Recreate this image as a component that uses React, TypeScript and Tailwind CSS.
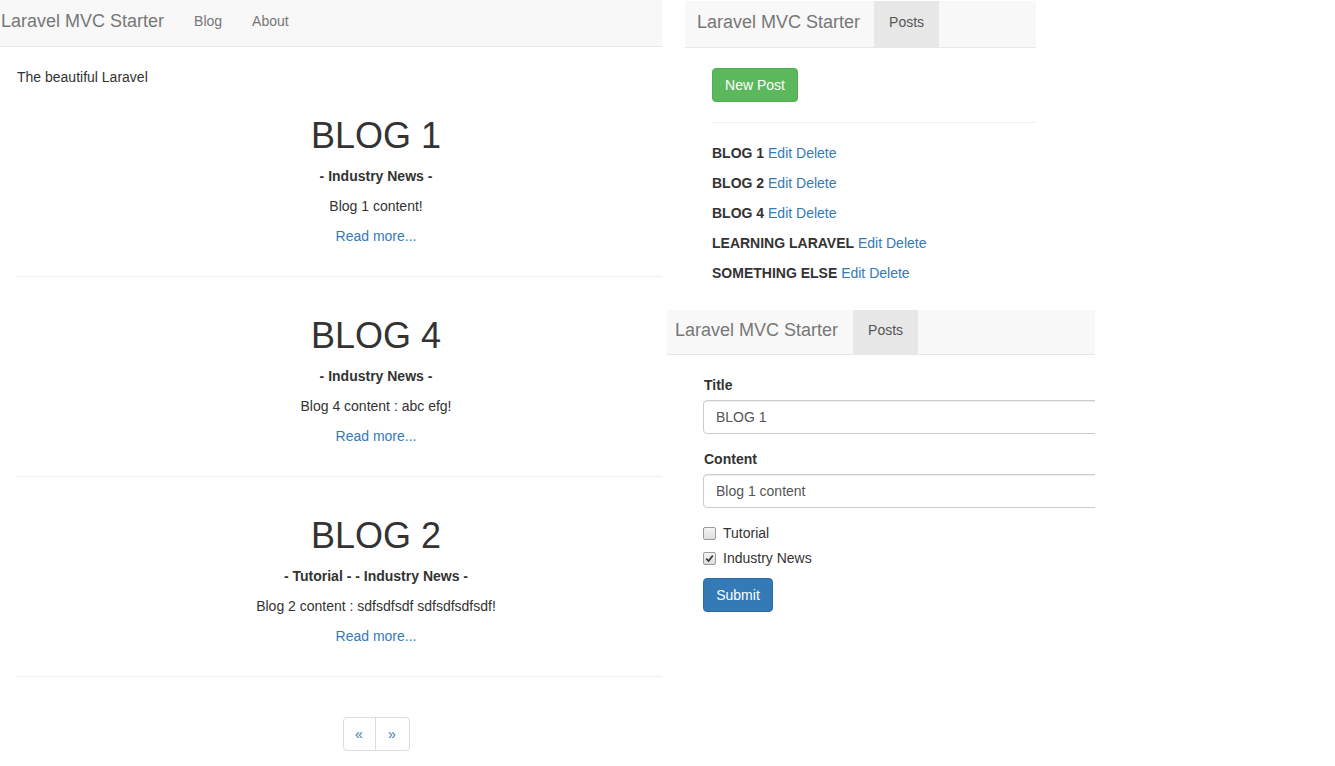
const posts = [
  { title: "BLOG 1", cats: "- Industry News -", body: "Blog 1 content!" },
  { title: "BLOG 4", cats: "- Industry News -", body: "Blog 4 content : abc efg!" },
  { title: "BLOG 2", cats: "- Tutorial - - Industry News -", body: "Blog 2 content : sdfsdfsdf sdfsdfsdfsdf!" },
];

const adminPosts = ["BLOG 1", "BLOG 2", "BLOG 4", "LEARNING LARAVEL", "SOMETHING ELSE"];

function CheckBox({ checked }: { checked?: boolean }) {
  return (
    <span className="flex h-[13px] w-[13px] shrink-0 items-center justify-center rounded-[2px] border border-[#9a9a9a] bg-gradient-to-b from-[#f4f4f4] to-[#dedede]">
      {checked && (
        <svg width="9" height="9" viewBox="0 0 9 9">
          <path d="M1.2 4.6 L3.6 7 L7.8 1.6" fill="none" stroke="#333" strokeWidth="1.7" />
        </svg>
      )}
    </span>
  );
}

function BlogPage() {
  return (
    <div className="w-[662px] shrink-0 overflow-hidden">
      <nav className="flex h-[47px] items-center border-b border-[#e7e7e7] bg-[#f8f8f8] pb-1 text-[#777]">
        <span className="pl-px text-[18px] leading-5">Laravel MVC Starter</span>
        <span className="ml-[30px] leading-5">Blog</span>
        <span className="ml-[30px] leading-5">About</span>
      </nav>
      <div className="ml-4 w-[720px]">
        <p className="mb-[10px] mt-5 h-5 pl-px">The beautiful Laravel</p>
        {posts.map((p, i) => (
          <div key={p.title}>
            {i > 0 && <div className="h-5" />}
            <div className="pb-[30px] pt-[19px] text-center">
              <h1 className="h-10 text-[36px] leading-10">{p.title}</h1>
              <p className="mt-[10px] h-5 font-bold">{p.cats}</p>
              <p className="mt-[10px] h-5">{p.body}</p>
              <p className="mt-[10px] h-5 text-[#337ab7]">Read more...</p>
            </div>
            <div className="h-px bg-[#eee]" />
          </div>
        ))}
        <div className="mt-10 flex justify-center">
          <div className="flex h-[34px] rounded border border-[#ddd] text-[#337ab7]">
            <span className="flex w-[32px] items-center justify-center border-r border-[#ddd]">«</span>
            <span className="flex w-[33px] items-center justify-center">»</span>
          </div>
        </div>
      </div>
    </div>
  );
}

function PostsList() {
  return (
    <div className="ml-[23px] mt-px h-[309px] w-[351px] overflow-hidden">
      <nav className="flex h-[47px] border-b border-[#e7e7e7] bg-[#f8f8f8]">
        <span className="flex items-center pb-1 pl-3 text-[18px] leading-5 text-[#777]">Laravel MVC Starter</span>
        <span className="ml-[14px] flex w-[65px] items-center justify-center bg-[#e7e7e7] pb-1 leading-5 text-[#555]">Posts</span>
      </nav>
      <div className="pl-[27px]">
        <button className="mt-5 h-[34px] w-[86px] rounded border border-[#4cae4c] bg-[#5cb85c] text-white">New Post</button>
        <div className="mt-5 h-px w-[400px] bg-[#eee]" />
        <ul className="mt-5">
          {adminPosts.map((t) => (
            <li key={t} className="mb-[10px] h-5 whitespace-nowrap">
              <span className="font-bold">{t}</span>{" "}
              <span className="text-[#337ab7]">Edit</span>{" "}
              <span className="text-[#337ab7]">Delete</span>
            </li>
          ))}
        </ul>
      </div>
    </div>
  );
}

function EditForm() {
  return (
    <div className="ml-[5px] w-[428px] overflow-hidden">
      <nav className="flex h-[45px] border-b border-[#e7e7e7] bg-[#f8f8f8]">
        <span className="flex items-center pb-[5px] pl-2 text-[18px] leading-5 text-[#777]">Laravel MVC Starter</span>
        <span className="ml-[15px] flex w-[65px] items-center justify-center bg-[#e7e7e7] pb-[5px] leading-5 text-[#555]">Posts</span>
      </nav>
      <div className="pl-[36px] pt-5">
        <label className="mb-[5px] block h-5 pl-px font-bold">Title</label>
        <div className="flex h-[34px] w-[500px] items-center rounded border border-[#ccc] px-3 text-[#555] shadow-[inset_0_1px_1px_rgba(0,0,0,0.075)]">BLOG 1</div>
        <label className="mb-[5px] mt-[15px] block h-5 pl-px font-bold">Content</label>
        <div className="flex h-[34px] w-[500px] items-center rounded border border-[#ccc] px-3 text-[#555] shadow-[inset_0_1px_1px_rgba(0,0,0,0.075)]">Blog 1 content</div>
        <div className="mt-[15px] flex h-5 items-center">
          <CheckBox />
          <span className="ml-[7px]">Tutorial</span>
        </div>
        <div className="mt-[5px] flex h-5 items-center">
          <CheckBox checked />
          <span className="ml-[7px]">Industry News</span>
        </div>
        <button className="mt-[10px] h-[34px] w-[70px] rounded border border-[#2e6da4] bg-[#337ab7] text-white">Submit</button>
      </div>
    </div>
  );
}

export default function App() {
  return (
    <div className="flex h-[766px] w-[1335px] overflow-hidden bg-white font-['Liberation_Sans',Arial,sans-serif] text-[14px] leading-5 text-[#333]">
      <BlogPage />
      <div className="flex flex-col">
        <PostsList />
        <EditForm />
      </div>
    </div>
  );
}
